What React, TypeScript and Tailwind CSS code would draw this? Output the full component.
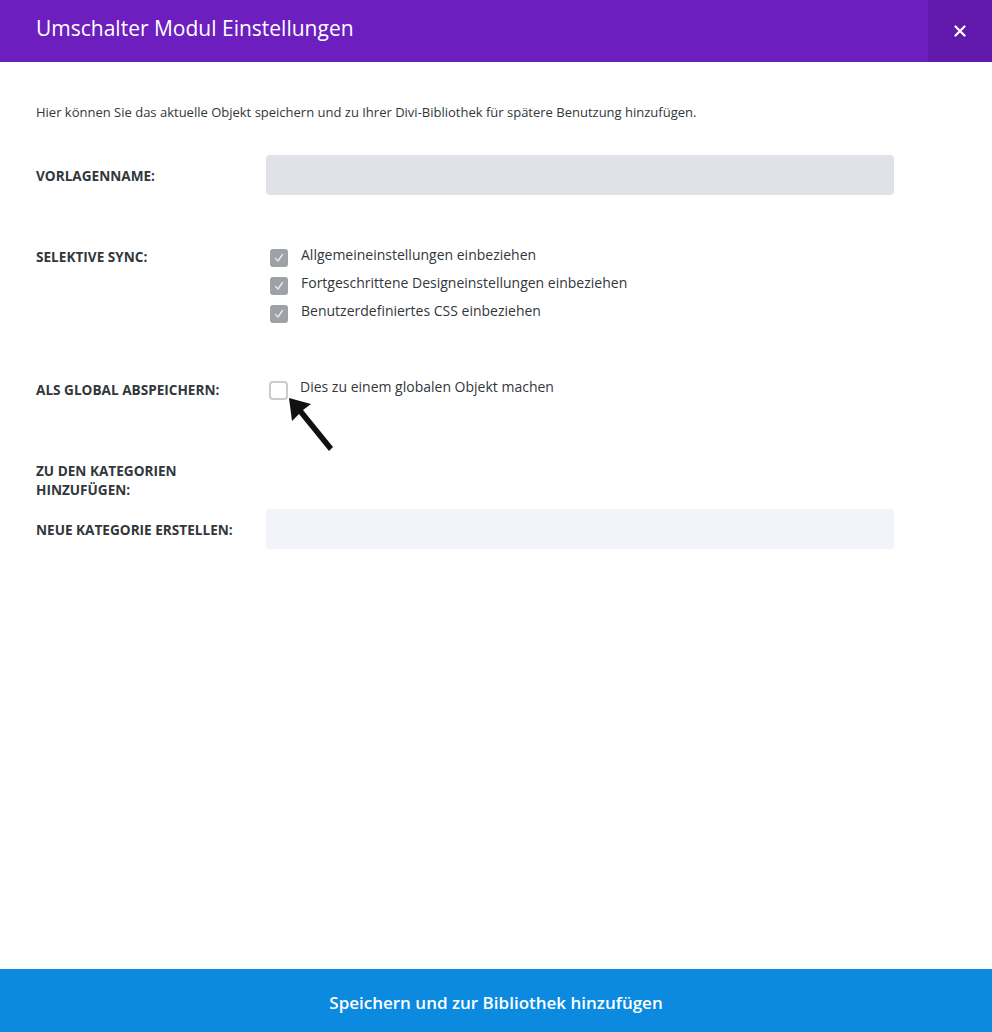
import React from "react";

const font = { fontFamily: '"Open Sans", "Noto Sans", sans-serif' };

const Check = ({ checked }: { checked: boolean }) =>
  checked ? (
    <span className="flex h-[18px] w-[18px] shrink-0 items-center justify-center rounded-[3px] bg-[#9ea1a6]">
      <svg width="12" height="12" viewBox="0 0 12 12" fill="none">
        <path d="M2.5 6.5 L5 9 L9.5 2.5" stroke="#e8eaec" strokeWidth="1.4" strokeLinecap="round" strokeLinejoin="round" />
      </svg>
    </span>
  ) : (
    <span className="block h-[19px] w-[19px] shrink-0 rounded-[4px] border-2 border-[#c9cccf] bg-white" />
  );

const Label = ({ children }: { children: React.ReactNode }) => (
  <div className="w-[230px] shrink-0 pr-6 text-[13.6px] font-bold uppercase leading-[19px] text-[#32373c]">
    {children}
  </div>
);

export default function App() {
  return (
    <div style={font} className="flex h-[1032px] w-[992px] flex-col bg-white">
      {/* header */}
      <div className="flex h-[62px] shrink-0 items-stretch bg-[#6c1ebe]">
        <h1 className="flex flex-1 items-center pb-[5px] pl-9 text-[21px] font-normal text-white">
          Umschalter Modul Einstellungen
        </h1>
        <button className="flex w-16 items-center justify-center bg-[#6019aa]">
          <svg width="12" height="12" viewBox="0 0 12 12">
            <path d="M1.5 1.5 L10.5 10.5 M10.5 1.5 L1.5 10.5" stroke="white" strokeWidth="2.2" strokeLinecap="round" />
          </svg>
        </button>
      </div>

      {/* body */}
      <div className="relative flex-1 px-9 pt-[103px]">
        <p className="absolute left-9 top-[41px] text-[13px] leading-[18px] text-[#32373c]">
          Hier können Sie das aktuelle Objekt speichern und zu Ihrer Divi-Bibliothek für spätere Benutzung hinzufügen.
        </p>

        <div className="-mt-[10px] flex items-center">
          <Label>Vorlagenname:</Label>
          <div className="h-10 w-[628px] rounded-[4px] bg-[#dfe3e8]" />
        </div>

        <div className="mt-[50px] flex">
          <div className="pt-[2px]">
            <Label>Selektive Sync:</Label>
          </div>
          <div className="flex flex-col gap-[8px] pl-1">
            {[
              "Allgemeineinstellungen einbeziehen",
              "Fortgeschrittene Designeinstellungen einbeziehen",
              "Benutzerdefiniertes CSS einbeziehen",
            ].map((t) => (
              <div key={t} className="flex h-5 items-start gap-[13px]">
                <span className="pt-[4px]">
                  <Check checked />
                </span>
                <span className="text-[14px] leading-[20px] text-[#32373c]">{t}</span>
              </div>
            ))}
          </div>
        </div>

        <div className="relative mt-[57px] flex">
          <div className="pt-[2px]">
            <Label>Als global abspeichern:</Label>
          </div>
          <div className="flex items-start gap-[12px] pl-[3px]">
            <span className="pt-[3px]">
              <Check checked={false} />
            </span>
            <span className="text-[14px] leading-[18px] text-[#32373c]">Dies zu einem globalen Objekt machen</span>
          </div>
          <svg
            className="absolute left-[250px] top-[18px]"
            width="52"
            height="62"
            viewBox="0 0 52 62"
          >
            <path d="M3 2 L25 8 L17 14 L47 51 L43 55 L13 18 L6 25 Z" fill="#111" />
          </svg>
        </div>

        <div className="mt-[61px] flex">
          <Label>
            Zu den Kategorien
            <br />
            Hinzufügen:
          </Label>
        </div>

        <div className="mt-[10px] flex items-center">
          <Label>Neue Kategorie erstellen:</Label>
          <div className="h-10 w-[628px] rounded-[4px] bg-[#f1f4f8]" />
        </div>
      </div>

      {/* footer */}
      <button className="flex h-[63px] shrink-0 items-center justify-center bg-[#0c8ae0] pt-1 text-[17px] font-semibold text-white">
        Speichern und zur Bibliothek hinzufügen
      </button>
    </div>
  );
}
